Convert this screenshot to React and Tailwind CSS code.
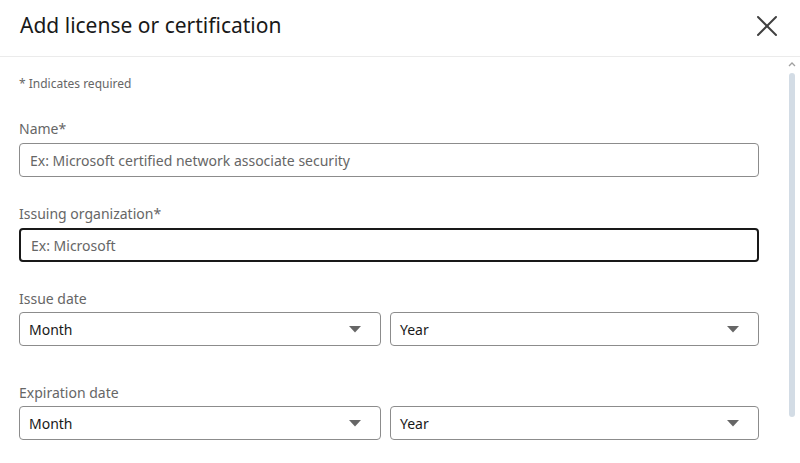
import React from "react";
import { X } from "lucide-react";

const Caret = () => (
  <svg width="12" height="7" viewBox="0 0 12 7" className="shrink-0">
    <path d="M0 0h12L6 6.5z" fill="#666666" />
  </svg>
);

const Select = ({ label, className }) => (
  <div
    className={`h-[34px] flex items-center justify-between pl-[9px] pr-[19px] border border-[#8c8c8c] rounded-[4px] text-[14px] text-[#191919] ${className}`}
  >
    <span>{label}</span>
    <Caret />
  </div>
);

const TextField = ({ label, placeholder, focused }) => (
  <div>
    <p className="text-[14px] leading-5 text-[#666666]">{label}</p>
    <div
      className={`mt-[4px] h-[34px] flex items-center px-[10px] rounded-[4px] text-[14px] text-[#666666] ${
        focused ? "border-2 border-[#191919] px-[9px]" : "border border-[#8c8c8c]"
      }`}
    >
      {placeholder}
    </div>
  </div>
);

const DateRow = ({ label, className }) => (
  <div className={className}>
    <p className="text-[14px] leading-5 text-[#666666]">{label}</p>
    <div className="mt-[3px] flex gap-[9px]">
      <Select label="Month" className="w-[362px]" />
      <Select label="Year" className="flex-1" />
    </div>
  </div>
);

export default function App() {
  return (
    <div
      className="w-[800px] h-[463px] bg-white overflow-hidden flex flex-col"
      style={{ fontFamily: '"Noto Sans", sans-serif' }}
    >
      <div className="h-[57px] shrink-0 flex items-center justify-between pl-5 pr-[15px] border-b border-[#ebebeb]">
        <h2 className="text-[21px] text-[#191919] -mt-[4px]">Add license or certification</h2>
        <X className="w-[36px] h-[36px] text-[#404040] -mt-[4px]" strokeWidth={1.3} />
      </div>
      <div className="flex flex-1 min-h-0">
        <div className="flex-1 pl-[19px] pr-[25px] pt-[19px]">
          <p className="text-[12px] leading-4 text-[#666666]">* Indicates required</p>
          <div className="mt-[27px]">
            <TextField label="Name*" placeholder="Ex: Microsoft certified network associate security" />
          </div>
          <div className="mt-[27px]">
            <TextField label="Issuing organization*" placeholder="Ex: Microsoft" focused />
          </div>
          <DateRow label="Issue date" className="mt-[27px]" />
          <DateRow label="Expiration date" className="mt-[37px]" />
        </div>
        <div className="w-[16px] shrink-0 flex flex-col items-center pt-[4px]">
          <svg width="8" height="6" viewBox="0 0 8 6">
            <path d="M1 5l3-3 3 3" fill="none" stroke="#a0a0a0" strokeWidth="1.3" />
          </svg>
          <div className="mt-[6px] w-[6px] h-[344px] rounded-full bg-[#d3dce5]" />
        </div>
      </div>
    </div>
  );
}
